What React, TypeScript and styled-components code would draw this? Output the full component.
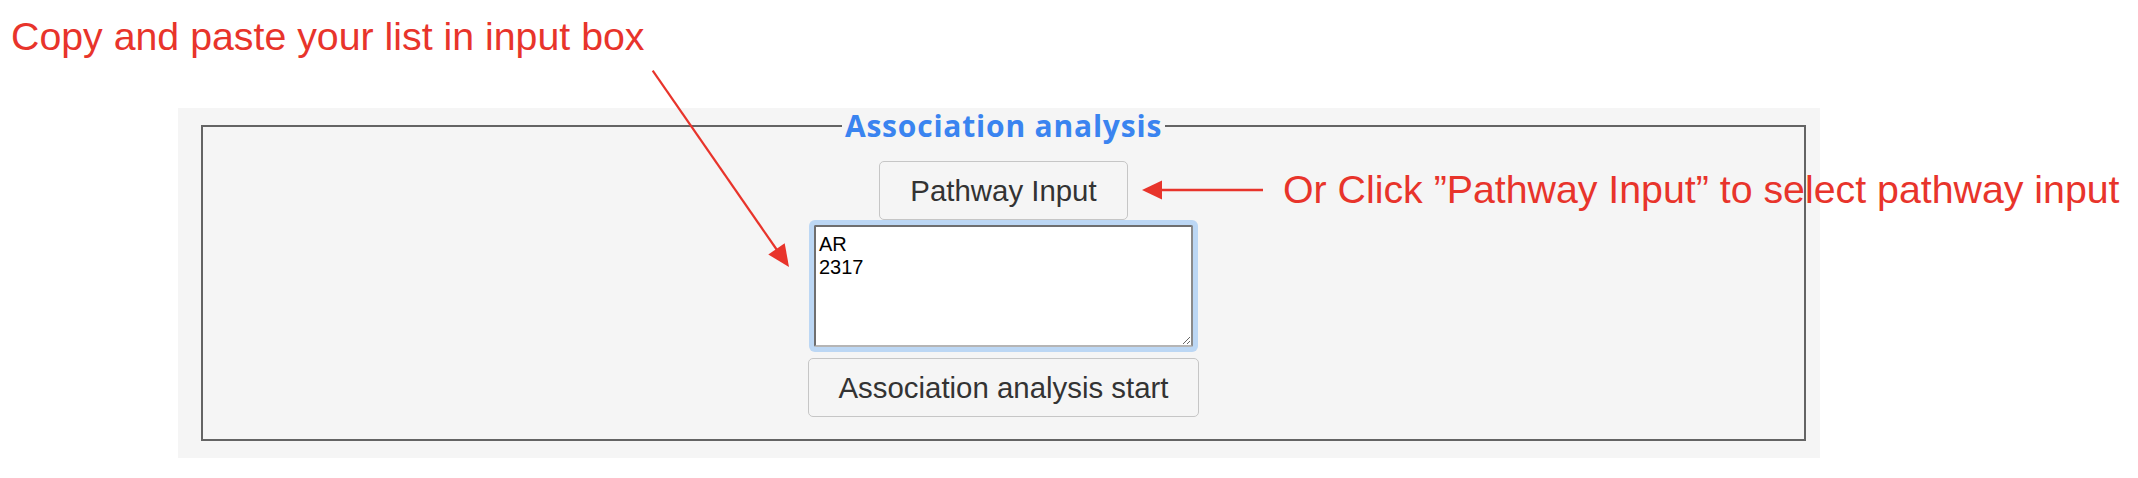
import React from "react";
import styled, { createGlobalStyle } from "styled-components";

const GlobalStyle = createGlobalStyle`
  html, body { margin: 0; padding: 0; background: #ffffff; }
  body { font-family: "Liberation Sans", Arial, sans-serif; }
`;

const RED = "#e8342b";

const Page = styled.div`
  position: relative;
  width: 2138px;
  height: 478px;
  overflow: hidden;
  display: flex;
  flex-direction: column;
  background: #ffffff;
`;

const Note = styled.div`
  color: ${RED};
  font-family: "Liberation Sans", Arial, sans-serif;
  font-size: 39.3px;
  line-height: 45px;
  white-space: nowrap;
`;

const TopNote = styled(Note)`
  padding: 14px 0 0 11px;
`;

const Panel = styled.section`
  box-sizing: border-box;
  width: 1642px;
  margin: 49px 0 0 178px;
  padding: 2px 14px 17px 23px;
  background: #f5f5f5;
`;

const Group = styled.fieldset`
  margin: 0;
  padding: 19px 0 22px;
  min-width: 0;
  border: 2px solid #646464;
`;

const Legend = styled.legend`
  margin: 0 auto;
  padding: 0 3px;
  font-family: "Open Sans", "DejaVu Sans", sans-serif;
  font-weight: 700;
  font-size: 30px;
  line-height: 32px;
  letter-spacing: 0.8px;
  color: #3a84f0;
`;

const Stack = styled.div`
  display: flex;
  flex-direction: column;
  align-items: center;
`;

const Button = styled.button`
  box-sizing: border-box;
  height: 59px;
  margin: 0;
  padding: 0 30px;
  background: #f5f5f5;
  border: 1.5px solid #c6c6c6;
  border-radius: 5px;
  color: #333333;
  font-family: "Liberation Sans", Arial, sans-serif;
  font-size: 29.4px;
  line-height: 1;
  cursor: pointer;
`;

const ListInput = styled.textarea`
  box-sizing: border-box;
  width: 379px;
  height: 122px;
  margin: 5px 0 11px;
  padding: 6px 3px;
  border: 2px solid;
  border-color: #6f6f6f #8a8a8a #b5b5b5 #6f6f6f;
  border-radius: 2px;
  box-shadow: 0 0 0 5px #bcd7f4;
  outline: none;
  background: #ffffff;
  color: #000000;
  font-family: "Liberation Sans", Arial, sans-serif;
  font-size: 20px;
  line-height: 23px;
  resize: both;
`;

const DiagonalArrow = styled.svg`
  position: absolute;
  left: 640px;
  top: 60px;
  width: 160px;
  height: 215px;
  overflow: visible;
`;

const SideNote = styled.div`
  position: absolute;
  left: 1142px;
  top: 167px;
  display: flex;
  align-items: center;
  gap: 19px;
`;

const LeftArrow = styled.svg`
  display: block;
  width: 122px;
  height: 24px;
`;

export default function App() {
  return (
    <>
      <GlobalStyle />
      <Page>
        <TopNote>Copy and paste your list in input box</TopNote>
        <Panel>
          <Group>
            <Legend>Association analysis</Legend>
            <Stack>
              <Button type="button">Pathway Input</Button>
              <ListInput defaultValue={"AR\n2317"} />
              <Button type="button">Association analysis start</Button>
            </Stack>
          </Group>
        </Panel>

        <DiagonalArrow viewBox="0 0 160 215">
          <line x1="12.7" y1="10.7" x2="137" y2="190" stroke={RED} strokeWidth="2.2" />
          <polygon points="149,207 128.3,194.6 144.7,183.2" fill={RED} />
        </DiagonalArrow>

        <SideNote>
          <LeftArrow viewBox="0 0 122 24">
            <line x1="18" y1="12" x2="121" y2="12" stroke={RED} strokeWidth="2.4" />
            <polygon points="0,12 20,2.5 20,21.5" fill={RED} />
          </LeftArrow>
          <Note>Or Click ”Pathway Input” to select pathway input</Note>
        </SideNote>
      </Page>
    </>
  );
}
